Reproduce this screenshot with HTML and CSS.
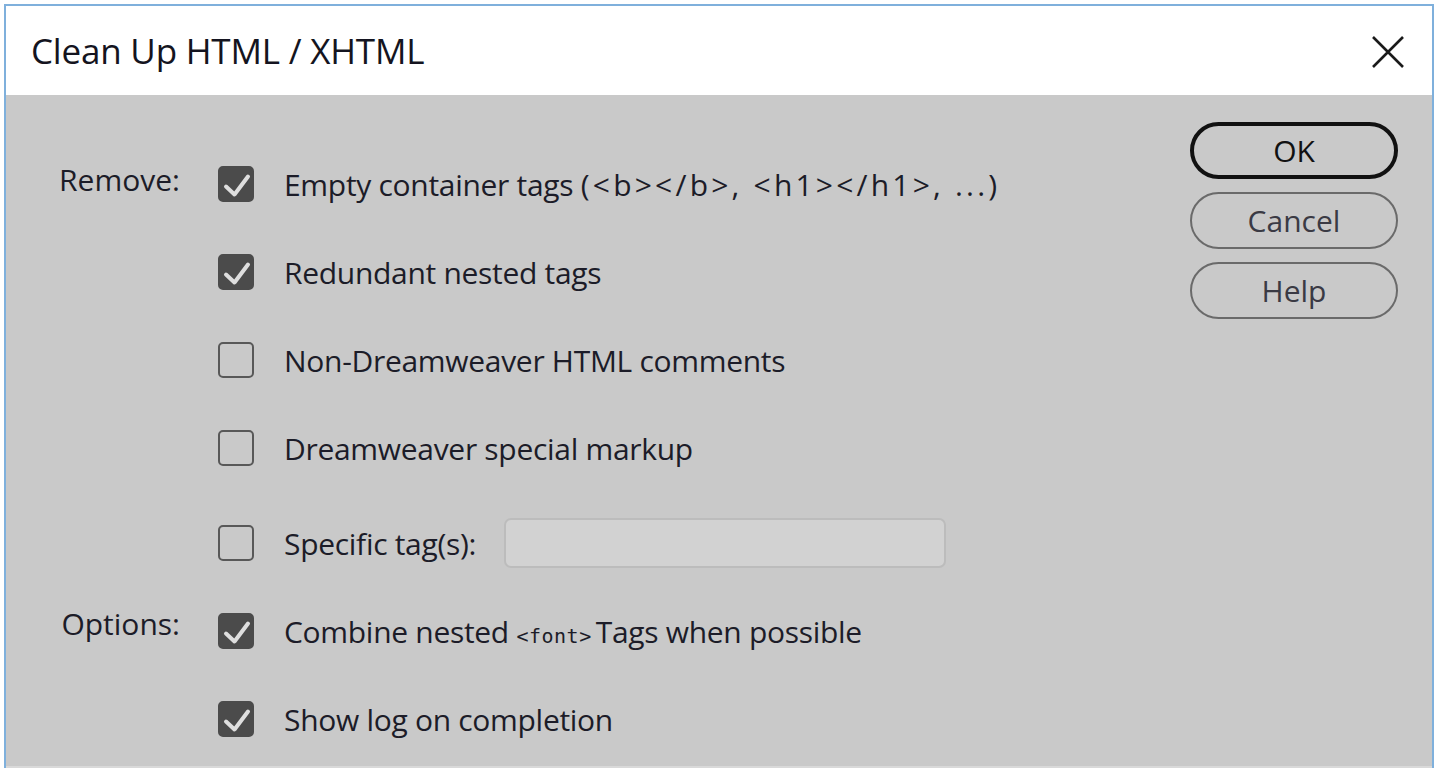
FILE: index.html
```html
<!DOCTYPE html>
<html>
<head>
<meta charset="utf-8">
<link rel="stylesheet" href="styles.css">
</head>
<body>
<div class="window">
  <div class="titlebar">
    <span class="title">Clean Up HTML / XHTML</span>
    <svg class="close" width="34" height="34" viewBox="0 0 34 34"><path d="M2 2 L32 32 M32 2 L2 32" stroke="#1a1a1a" stroke-width="2.6" fill="none"/></svg>
  </div>
  <div class="body">
    <div class="form">
      <div class="row">
        <div class="label">Remove:</div>
        <span class="cb checked"><svg viewBox="0 0 36 36"><path d="M8 20.5 L16.5 28.5 L30 10.5" stroke="#dedede" stroke-width="4" fill="none" stroke-linecap="round" stroke-linejoin="round"/></svg></span>
        <span class="text">Empty container tags <span class="wide">(&lt;b&gt;&lt;/b&gt;, &lt;h1&gt;&lt;/h1&gt;, ...)</span></span>
      </div>
      <div class="row">
        <div class="label"></div>
        <span class="cb checked"><svg viewBox="0 0 36 36"><path d="M8 20.5 L16.5 28.5 L30 10.5" stroke="#dedede" stroke-width="4" fill="none" stroke-linecap="round" stroke-linejoin="round"/></svg></span>
        <span class="text">Redundant nested tags</span>
      </div>
      <div class="row">
        <div class="label"></div>
        <span class="cb"></span>
        <span class="text">Non-Dreamweaver HTML comments</span>
      </div>
      <div class="row">
        <div class="label"></div>
        <span class="cb"></span>
        <span class="text">Dreamweaver special markup</span>
      </div>
      <div class="row row-specific">
        <div class="label"></div>
        <span class="cb"></span>
        <span class="text">Specific tag(s):</span>
        <span class="input"></span>
      </div>
      <div class="row">
        <div class="label label-options">Options:</div>
        <span class="cb checked"><svg viewBox="0 0 36 36"><path d="M8 20.5 L16.5 28.5 L30 10.5" stroke="#dedede" stroke-width="4" fill="none" stroke-linecap="round" stroke-linejoin="round"/></svg></span>
        <span class="text">Combine nested <code>&lt;font&gt;</code>Tags when possible</span>
      </div>
      <div class="row">
        <div class="label"></div>
        <span class="cb checked"><svg viewBox="0 0 36 36"><path d="M8 20.5 L16.5 28.5 L30 10.5" stroke="#dedede" stroke-width="4" fill="none" stroke-linecap="round" stroke-linejoin="round"/></svg></span>
        <span class="text">Show log on completion</span>
      </div>
    </div>
    <div class="buttons">
      <div class="btn btn-default">OK</div>
      <div class="btn">Cancel</div>
      <div class="btn">Help</div>
    </div>
  </div>
</div>
</body>
</html>
```
FILE: styles.css
```css
html, body {
  margin: 0;
  padding: 0;
  background: #ffffff;
}
body {
  font-family: "Open Sans", "Noto Sans", sans-serif;
  color: #1e1e1e;
}
.window {
  margin: 4px 6px 4px 4px;
  height: 764px;
  box-sizing: border-box;
  border: 2px solid #7fb0dc;
  border-bottom: none;
  display: flex;
  flex-direction: column;
  background: #c9c9c9;
}
.titlebar {
  height: 89px;
  background: #ffffff;
  display: flex;
  align-items: center;
  justify-content: space-between;
  padding: 0 27px 0 25px;
  flex: none;
}
.title {
  font-size: 35px;
  color: #141420;
  letter-spacing: -0.2px;
}
.close {
  display: block;
  margin-top: 2px;
}
.body {
  flex: 1;
  display: flex;
  border-bottom: 2px solid #d9d9d9;
}
.form {
  flex: 1;
  padding-top: 45px;
  padding-left: 46px;
}
.row {
  height: 88px;
  display: flex;
  align-items: center;
}
.row-specific {
  margin-top: 7px;
}
.label {
  width: 128px;
  margin-right: 38px;
  flex: none;
  text-align: right;
  font-size: 30px;
  color: #1c1c28;
  margin-top: -10px;
}
.label-options {
  margin-top: -16px;
}
.cb {
  width: 36px;
  height: 36px;
  box-sizing: border-box;
  border-radius: 5px;
  border: 2.5px solid #585858;
  flex: none;
  display: block;
  position: relative;
}
.cb.checked {
  background: #4b4b4b;
  border-color: #4b4b4b;
}
.cb svg {
  position: absolute;
  left: -2.5px;
  top: -2.5px;
  display: block;
  width: 36px;
  height: 36px;
}
.text {
  margin-left: 30px;
  font-size: 30px;
  letter-spacing: -0.3px;
  color: #1c1c28;
  white-space: nowrap;
}
.wide {
  letter-spacing: 3.2px;
}
.text code {
  font-family: "DejaVu Sans Mono", monospace;
  font-size: 20px;
  letter-spacing: 0.5px;
  margin-right: 4px;
}
.input {
  margin-left: 28px;
  width: 442px;
  height: 50px;
  box-sizing: border-box;
  border: 2px solid #bcbcbc;
  border-radius: 7px;
  background: #d2d2d2;
}
.buttons {
  width: 208px;
  padding-top: 27px;
  padding-right: 34px;
  display: flex;
  flex-direction: column;
  gap: 13px;
  flex: none;
}
.btn {
  height: 57px;
  box-sizing: border-box;
  border: 2.5px solid #6a6a6a;
  border-radius: 29px;
  display: flex;
  align-items: center;
  justify-content: center;
  font-size: 30px;
  color: #3a3a44;
}
.btn-default {
  border: 4px solid #111;
  color: #111;
}
```
